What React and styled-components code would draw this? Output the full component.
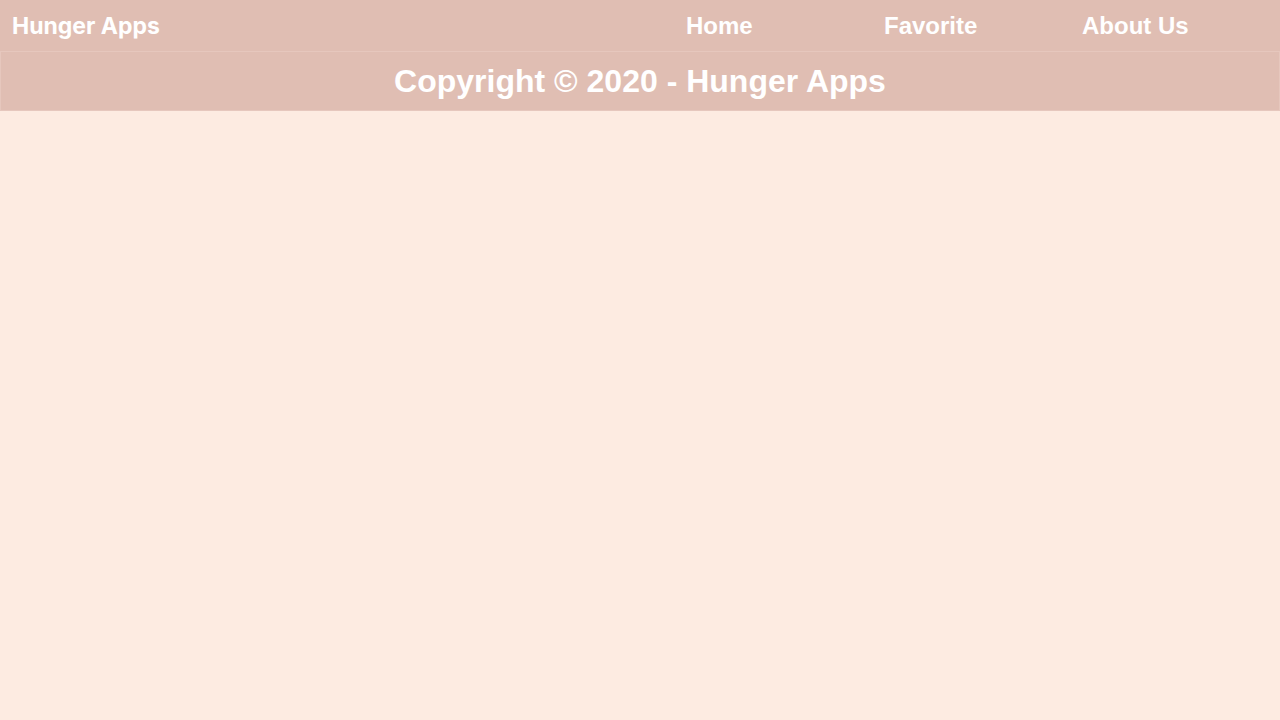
import React from 'react';
import styled, { createGlobalStyle } from 'styled-components';

const GlobalStyle = createGlobalStyle`
    html, body {
        margin: 0;
        padding: 0;
        background-color: #fdebe1;
        font-family: "Liberation Sans", Arial, sans-serif;
    }
    #root {
        min-height: 100vh;
    }
`;

const AppBar = styled.header`
    display: flex;
    align-items: center;
    justify-content: space-between;
    height: 51px;
    background-color: #e0beb3;
`;

const Brand = styled.a`
    padding-left: 12px;
    font-family: "Inter", "Liberation Sans", sans-serif;
    font-size: 23px;
    font-weight: 700;
    color: #ffffff;
    text-decoration: none;
`;

const NavList = styled.ul`
    display: grid;
    grid-template-columns: repeat(3, 198px);
    margin: 0;
    padding: 0;
    list-style: none;
`;

const NavItem = styled.li`
    font-size: 24px;
    font-weight: 700;
    color: #ffffff;
`;

const NavLink = styled.a`
    color: inherit;
    text-decoration: none;
`;

const Footer = styled.footer`
    display: flex;
    align-items: center;
    justify-content: center;
    height: 58px;
    background-color: #e0beb3;
    border: 1px solid #e6c7bd;
`;

const FooterText = styled.p`
    margin: 0;
    font-size: 32px;
    font-weight: 700;
    color: #ffffff;
`;

const App = () => {
    const links = ['Home', 'Favorite', 'About Us'];

    return (
        <>
            <GlobalStyle />
            <AppBar>
                <Brand href="#">Hunger Apps</Brand>
                <NavList>
                    {links.map(link => (
                        <NavItem key={link}>
                            <NavLink href="#">{link}</NavLink>
                        </NavItem>
                    ))}
                </NavList>
            </AppBar>
            <Footer>
                <FooterText>Copyright © 2020 - Hunger Apps</FooterText>
            </Footer>
        </>
    );
};

export default App;
